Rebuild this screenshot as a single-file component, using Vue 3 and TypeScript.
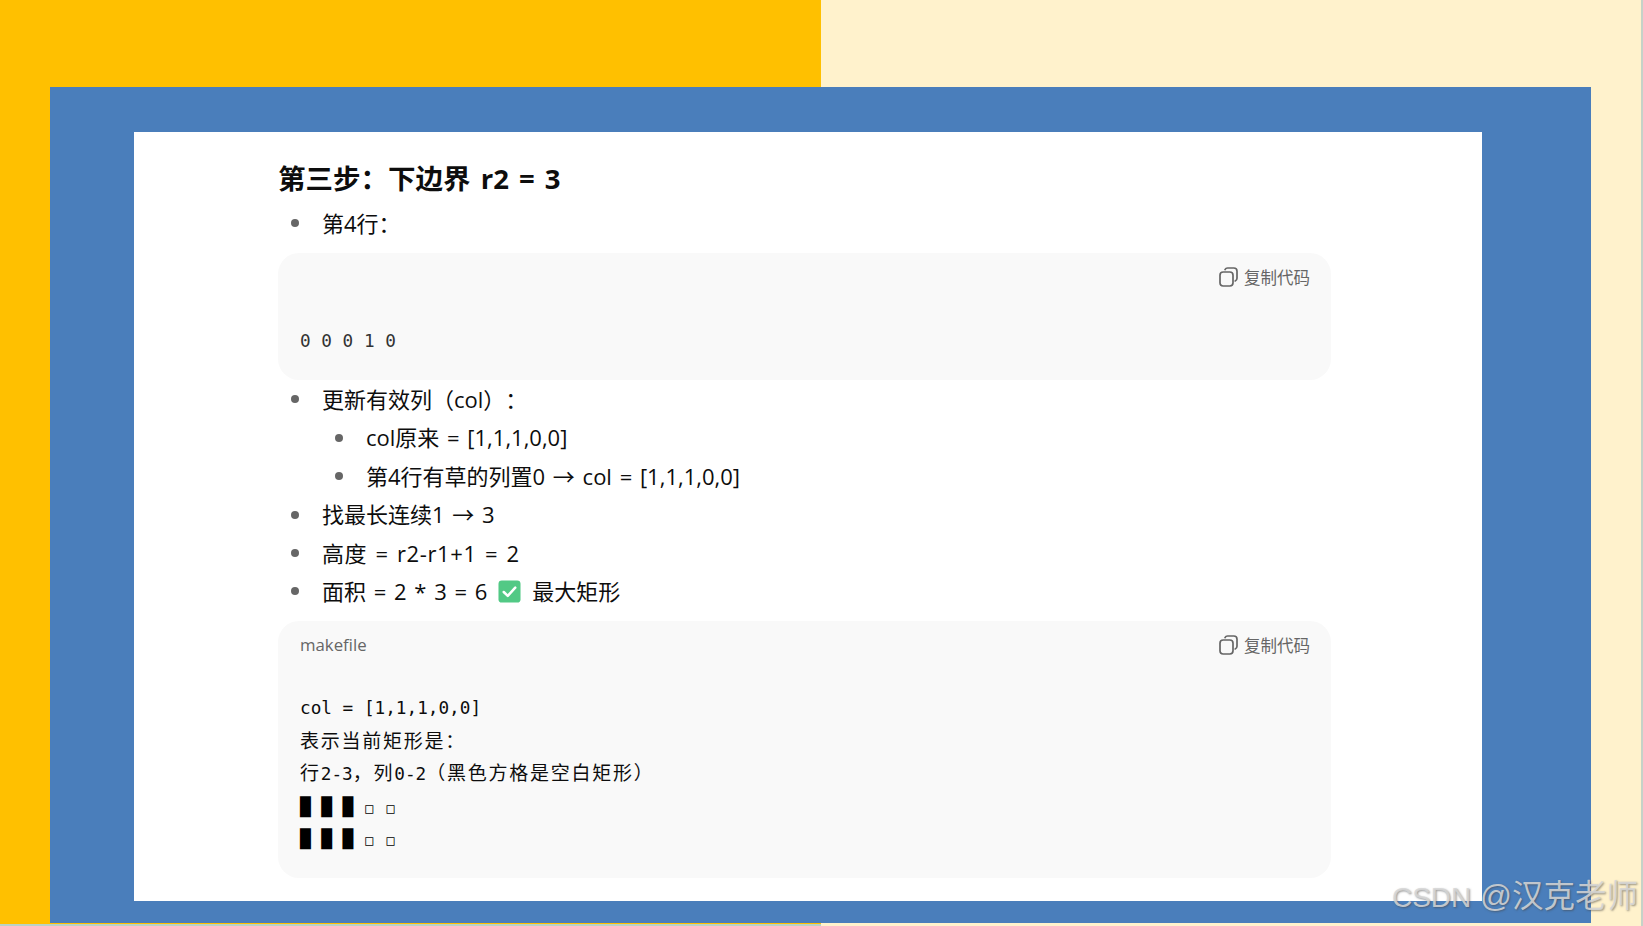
<script setup lang="ts">
interface Item { text: string; level: number; wide?: boolean; done?: boolean; after?: string }
const firstItems: Item[] = [
  { text: '更新有效列（col）：', level: 0 },
  { text: 'col原来 = [1,1,1,0,0]', level: 1 },
  { text: '第4行有草的列置0 → col = [1,1,1,0,0]', level: 1 },
  { text: '找最长连续1 → 3', level: 0 },
  { text: '高度 = r2-r1+1 = 2', level: 0, wide: true },
  { text: '面积 = 2 * 3 = 6', level: 0, done: true, after: '最大矩形' },
]
</script>

<template>
  <div class="page">
    <div class="frame">
      <main class="panel">
        <h3 class="title">第三步：下边界 r2 = 3</h3>
        <div class="row">第4行：</div>

        <section class="code code-a">
          <header class="code-head">
            <span class="lang"></span>
            <span class="copy">
              <svg width="19" height="20" viewBox="0 0 19 20" fill="none" stroke="#666" stroke-width="1.7">
                <rect x="1" y="5" width="13" height="14" rx="3.2" />
                <path d="M6 2.6C6.5 1.6 7.4 1 8.6 1h6.2C16.6 1 18 2.4 18 4.2v7c0 1.2-.7 2.2-1.8 2.7" stroke-linecap="round" />
              </svg>
              复制代码
            </span>
          </header>
          <div class="code-body"><div class="line plain">0 0 0 1 0</div></div>
        </section>

        <div
          v-for="item in firstItems"
          :key="item.text"
          class="row"
          :class="{ nested: item.level === 1, wide: item.wide }"
        >
          {{ item.text }}
          <template v-if="item.done">
            <svg class="check" width="23" height="23" viewBox="0 0 24 24">
              <rect x="0.5" y="0.5" width="23" height="23" rx="3.5" fill="#52c985" />
              <path d="M6 12.5l4.2 4L18 8" fill="none" stroke="#fff" stroke-width="2.6" stroke-linecap="round" stroke-linejoin="round" />
            </svg>
            {{ item.after }}
          </template>
        </div>

        <section class="code code-b">
          <header class="code-head">
            <span class="lang">makefile</span>
            <span class="copy">
              <svg width="19" height="20" viewBox="0 0 19 20" fill="none" stroke="#666" stroke-width="1.7">
                <rect x="1" y="5" width="13" height="14" rx="3.2" />
                <path d="M6 2.6C6.5 1.6 7.4 1 8.6 1h6.2C16.6 1 18 2.4 18 4.2v7c0 1.2-.7 2.2-1.8 2.7" stroke-linecap="round" />
              </svg>
              复制代码
            </span>
          </header>
          <div class="code-body">
            <div class="line">col = [1,1,1,0,0]</div>
            <div class="line"><span class="cjk">表示当前矩形是：</span></div>
            <div class="line"><span class="cjk">行</span>2-3<span class="cjk">，列</span>0-2<span class="cjk">（黑色方格是空白矩形）</span></div>
            <div class="line blocks">█ █ █ <span class="small">□</span> <span class="small">□</span></div>
            <div class="line blocks">█ █ █ <span class="small">□</span> <span class="small">□</span></div>
          </div>
        </section>
      </main>
    </div>
    <div class="watermark"><span class="mark-latin">CSDN</span> @汉克老师</div>
  </div>
</template>

<style>
html, body { margin: 0; padding: 0; overflow: hidden; }
</style>

<style scoped>
.page {
  position: relative;
  box-sizing: border-box;
  width: 1643px;
  height: 926px;
  padding: 87px 52px 3px 50px;
  background:
    linear-gradient(#b9d3c5, #b9d3c5) left bottom / 821px 2px no-repeat,
    linear-gradient(#c5d2c8, #c5d2c8) right top / 2px 100% no-repeat,
    linear-gradient(to right, #ffc000 0, #ffc000 821px, #fff2cc 821px, #fff2cc 100%);
  overflow: hidden;
}
.frame {
  box-sizing: border-box;
  height: 836px;
  padding: 45px 109px 22px 84px;
  background: #4a7ebb;
}
.panel {
  box-sizing: border-box;
  height: 769px;
  padding: 22px 151px 0 144px;
  background: #fff;
  color: #0d0d0d;
  font-family: "Open Sans", "Noto Sans CJK SC", sans-serif;
  text-spacing-trim: space-all;
}
.title {
  margin: 0;
  font-family: "Open Sans", "Noto Sans CJK SC", sans-serif;
  font-size: 27.5px;
  line-height: 50px;
  font-weight: 700;
  word-spacing: 3px;
}
.row {
  position: relative;
  box-sizing: border-box;
  display: flex;
  align-items: center;
  gap: 11px;
  height: 38.4px;
  padding-left: 44px;
  padding-bottom: 3px;
  font-size: 22px;
  word-spacing: 2px;
  white-space: nowrap;
}
.row.wide { letter-spacing: 0.6px; }
.row::before {
  content: "";
  position: absolute;
  left: 13px;
  top: 15px;
  width: 8px;
  height: 8px;
  border-radius: 50%;
  background: #666;
}
.row.nested { padding-left: 88px; }
.row.nested::before { left: 57px; }
.check { flex: none; margin-top: 3px; }
.code {
  box-sizing: border-box;
  margin: 11px 0 0;
  padding: 0 21px 0 22px;
  border-radius: 21px;
  background: #f9f9f9;
}
.code-a { height: 127px; }
.code-b { height: 257px; margin-top: 10px; }
.code-head {
  display: flex;
  justify-content: space-between;
  align-items: center;
  height: 48px;
  color: #666;
  font-size: 16.8px;
}
.copy {
  display: flex;
  align-items: center;
  gap: 6px;
  font-size: 16.5px;
  font-family: "Noto Sans CJK SC", sans-serif;
}
.code-body {
  padding-top: 23px;
  font-family: "DejaVu Sans Mono", "Noto Sans CJK SC", monospace;
  font-size: 17.7px;
  color: #0d0d0d;
}
.code-a .code-body { padding-top: 24px; }
.line {
  height: 32px;
  line-height: 32px;
  white-space: pre;
}
.plain { color: #333; }
.cjk {
  font-family: "Noto Sans CJK SC", sans-serif;
  font-size: 19px;
  letter-spacing: 1.75px;
}
.blocks { position: relative; top: 3px; color: #000; font-size: 17.7px; }
.small {
  display: inline-block;
  width: 10.65px;
  text-align: center;
  font-size: 13.5px;
}
.watermark {
  position: absolute;
  right: 5px;
  bottom: 10px;
  font-family: "Liberation Sans", "Noto Sans CJK SC", sans-serif;
  font-size: 31.5px;
  line-height: 36px;
  color: rgba(215, 215, 215, 0.85);
  text-shadow: 1px 1px 2px rgba(70, 70, 70, 0.55);
  white-space: nowrap;
}
.mark-latin { font-size: 28px; }
</style>
